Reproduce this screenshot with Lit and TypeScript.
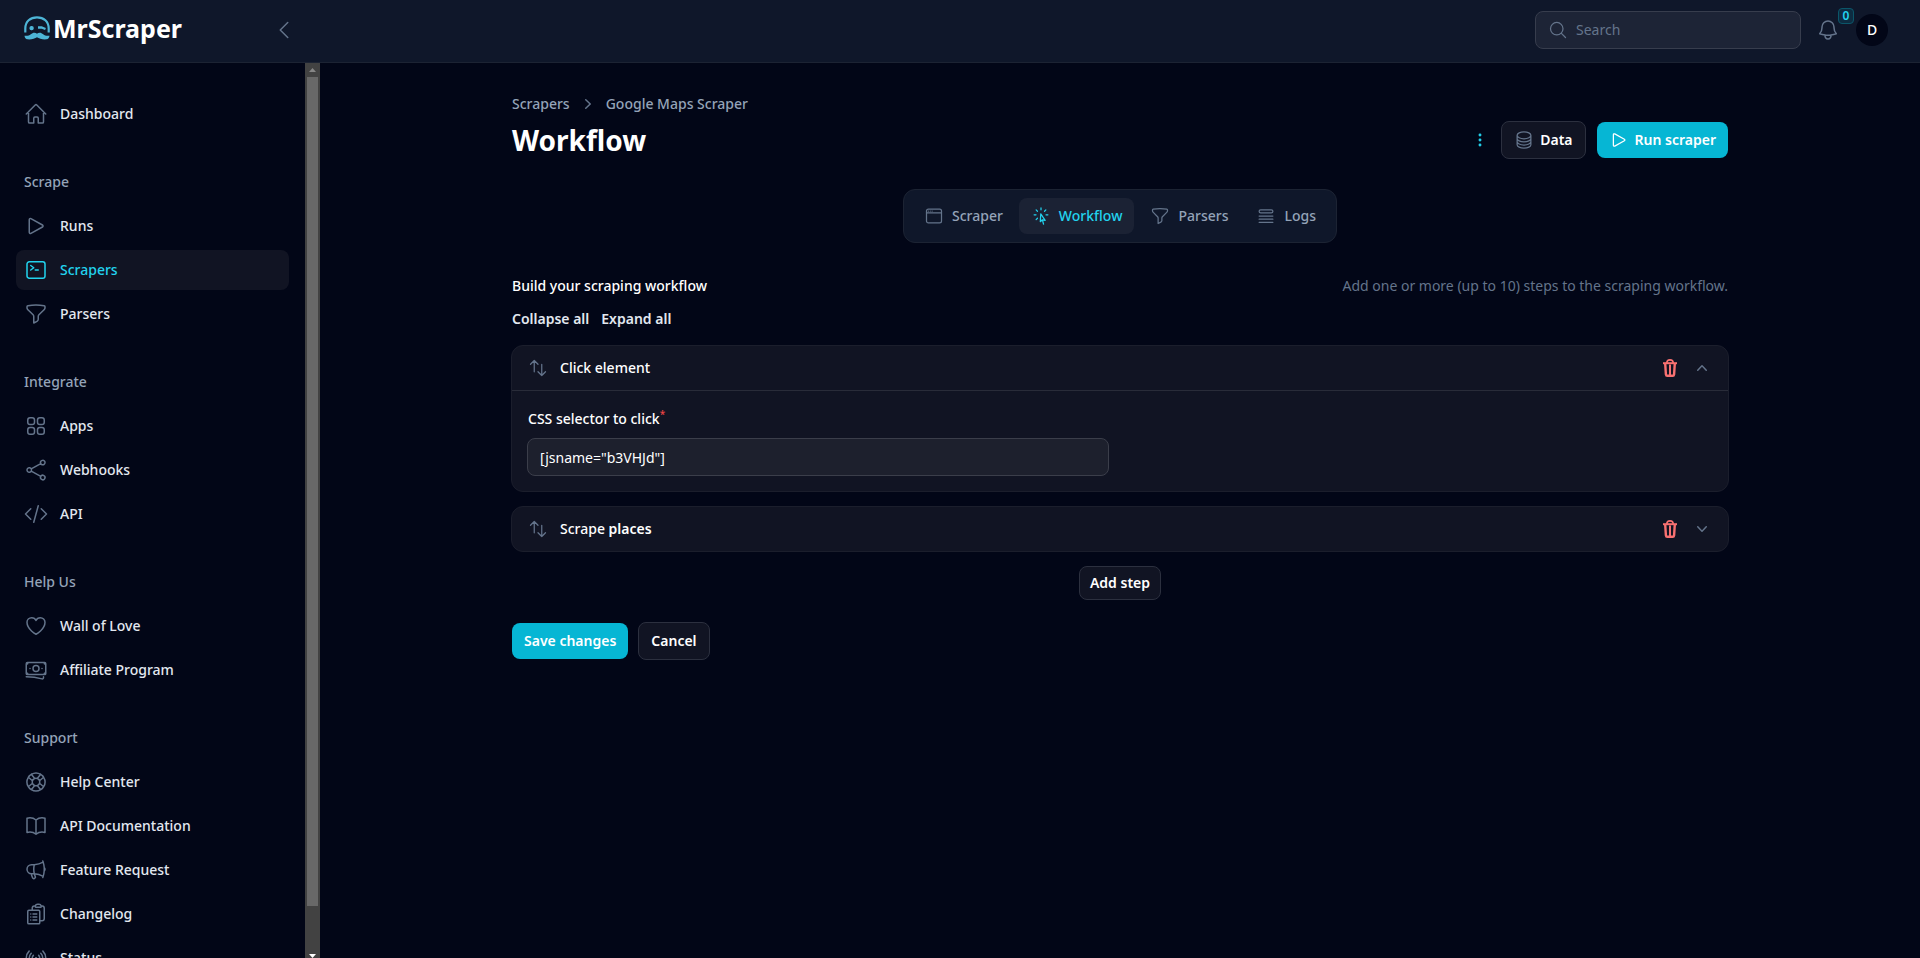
import { LitElement, html, css, svg, nothing } from "lit";
import { customElement, property, state } from "lit/decorators.js";
import { classMap } from "lit/directives/class-map.js";

const outline: Record<string, string[]> = {
  home: [
    "m2.25 12 8.954-8.955c.44-.439 1.152-.439 1.591 0L21.75 12M4.5 9.75v10.125c0 .621.504 1.125 1.125 1.125H9.75v-4.875c0-.621.504-1.125 1.125-1.125h2.25c.621 0 1.125.504 1.125 1.125V21h4.125c.621 0 1.125-.504 1.125-1.125V9.75",
  ],
  play: [
    "M5.25 5.653c0-.856.917-1.398 1.667-.986l11.54 6.347a1.125 1.125 0 0 1 0 1.972l-11.54 6.347a1.125 1.125 0 0 1-1.667-.986V5.653Z",
  ],
  terminal: [
    "m6.75 7.5 3 2.25-3 2.25m4.5 0h3m-9 8.25h13.5A2.25 2.25 0 0 0 21 18V6a2.25 2.25 0 0 0-2.25-2.25H5.25A2.25 2.25 0 0 0 3 6v12a2.25 2.25 0 0 0 2.25 2.25Z",
  ],
  funnel: [
    "M12 3c2.755 0 5.455.232 8.083.678.533.09.917.556.917 1.096v1.044a2.25 2.25 0 0 1-.659 1.591l-5.432 5.432a2.25 2.25 0 0 0-.659 1.591v2.927a2.25 2.25 0 0 1-1.244 2.013L9.75 21v-6.568a2.25 2.25 0 0 0-.659-1.591L3.659 7.409A2.25 2.25 0 0 1 3 5.818V4.774c0-.54.384-1.006.917-1.096A48.32 48.32 0 0 1 12 3Z",
  ],
  apps: [
    "M3.75 6A2.25 2.25 0 0 1 6 3.75h2.25A2.25 2.25 0 0 1 10.5 6v2.25a2.25 2.25 0 0 1-2.25 2.25H6a2.25 2.25 0 0 1-2.25-2.25V6ZM3.75 15.75A2.25 2.25 0 0 1 6 13.5h2.25a2.25 2.25 0 0 1 2.25 2.25V18a2.25 2.25 0 0 1-2.25 2.25H6A2.25 2.25 0 0 1 3.75 18v-2.25ZM13.5 6a2.25 2.25 0 0 1 2.25-2.25H18A2.25 2.25 0 0 1 20.25 6v2.25A2.25 2.25 0 0 1 18 10.5h-2.25a2.25 2.25 0 0 1-2.25-2.25V6ZM13.5 15.75a2.25 2.25 0 0 1 2.25-2.25H18a2.25 2.25 0 0 1 2.25 2.25V18A2.25 2.25 0 0 1 18 20.25h-2.25A2.25 2.25 0 0 1 13.5 18v-2.25Z",
  ],
  share: [
    "M7.217 10.907a2.25 2.25 0 1 0 0 2.186m0-2.186c.18.324.283.696.283 1.093s-.103.77-.283 1.093m0-2.186 9.566-5.314m-9.566 7.5 9.566 5.314m0 0a2.25 2.25 0 1 0 3.935 2.186 2.25 2.25 0 0 0-3.935-2.186Zm0-12.814a2.25 2.25 0 1 0 3.933-2.185 2.25 2.25 0 0 0-3.933 2.185Z",
  ],
  code: ["M17.25 6.75 22.5 12l-5.25 5.25m-10.5 0L1.5 12l5.25-5.25m7.5-3-4.5 16.5"],
  heart: [
    "M21 8.25c0-2.485-2.099-4.5-4.688-4.5-1.935 0-3.597 1.126-4.312 2.733-.715-1.607-2.377-2.733-4.313-2.733C5.1 3.75 3 5.765 3 8.25c0 7.22 9 12 9 12s9-4.78 9-12Z",
  ],
  cash: [
    "M2.25 18.75a60.07 60.07 0 0 1 15.797 2.101c.727.198 1.453-.342 1.453-1.096V18.75M3.75 4.5v.75A.75.75 0 0 1 3 6h-.75m0 0v-.375c0-.621.504-1.125 1.125-1.125H20.25M2.25 6v9m18-10.5v.75c0 .414.336.75.75.75h.75m-1.5-1.5h.375c.621 0 1.125.504 1.125 1.125v9.75c0 .621-.504 1.125-1.125 1.125h-.375m1.5-1.5H21a.75.75 0 0 0-.75.75v.75m0 0H3.75m0 0h-.375a1.125 1.125 0 0 1-1.125-1.125V15m1.5 1.5v-.75A.75.75 0 0 0 3 15h-.75M15 10.5a3 3 0 1 1-6 0 3 3 0 0 1 6 0Zm3 0h.008v.008H18V10.5Zm-12 0h.008v.008H6V10.5Z",
  ],
  lifebuoy: [
    "M16.712 4.33a9.027 9.027 0 0 1 1.652 1.306c.51.51.944 1.064 1.306 1.652M16.712 4.33l-3.448 4.138m3.448-4.138a9.014 9.014 0 0 0-9.424 0M19.67 7.288l-4.138 3.448m4.138-3.448a9.014 9.014 0 0 1 0 9.424m-4.138-5.976a3.736 3.736 0 0 0-.88-1.388 3.737 3.737 0 0 0-1.388-.88m2.268 2.268a3.765 3.765 0 0 1 0 2.528m-2.268-4.796a3.765 3.765 0 0 0-2.528 0m4.796 4.796c-.181.506-.475.982-.88 1.388a3.736 3.736 0 0 1-1.388.88m2.268-2.268 4.138 3.448m0 0a9.027 9.027 0 0 1-1.306 1.652c-.51.51-1.064.944-1.652 1.306m0 0-3.448-4.138m3.448 4.138a9.014 9.014 0 0 1-9.424 0m5.976-4.138a3.765 3.765 0 0 1-2.528 0m0 0a3.736 3.736 0 0 1-1.388-.88 3.737 3.737 0 0 1-.88-1.388m2.268 2.268L7.288 19.67m0 0a9.024 9.024 0 0 1-1.652-1.306 9.027 9.027 0 0 1-1.306-1.652m0 0 4.138-3.448M4.33 16.712a9.014 9.014 0 0 1 0-9.424m4.138 5.976a3.765 3.765 0 0 1 0-2.528m0 0c.181-.506.475-.982.88-1.388a3.736 3.736 0 0 1 1.388-.88m-2.268 2.268L4.33 7.288m6.406 1.18L7.288 4.33m0 0a9.024 9.024 0 0 0-1.652 1.306A9.025 9.025 0 0 0 4.33 7.288",
  ],
  book: [
    "M12 6.042A8.967 8.967 0 0 0 6 3.75c-1.052 0-2.062.18-3 .512v14.25A8.987 8.987 0 0 1 6 18c2.305 0 4.408.867 6 2.292m0-14.25a8.966 8.966 0 0 1 6-2.292c1.052 0 2.062.18 3 .512v14.25A8.987 8.987 0 0 0 18 18a8.967 8.967 0 0 0-6 2.292m0-14.25v14.25",
  ],
  megaphone: [
    "M10.34 15.84c-.688-.06-1.386-.09-2.09-.09H7.5a4.5 4.5 0 1 1 0-9h.75c.704 0 1.402-.03 2.09-.09m0 9.18c.253.962.584 1.892.985 2.783.247.55.06 1.21-.463 1.511l-.657.38c-.551.318-1.26.117-1.527-.461a20.845 20.845 0 0 1-1.44-4.282m3.102.069a18.03 18.03 0 0 1-.59-4.59c0-1.586.205-3.124.59-4.59m0 9.18a23.848 23.848 0 0 1 8.835 2.535M10.34 6.66a23.847 23.847 0 0 0 8.835-2.535m0 0A23.74 23.74 0 0 0 18.795 3m.38 1.125a23.91 23.91 0 0 1 1.014 5.395m-1.014 8.855c-.118.38-.245.754-.38 1.125m.38-1.125a23.91 23.91 0 0 0 1.014-5.395m0-3.46c.495.413.811 1.035.811 1.73 0 .695-.316 1.317-.811 1.73m0-3.46a24.347 24.347 0 0 1 0 3.46",
  ],
  clipboard: [
    "M9 12h3.75M9 15h3.75M9 18h3.75m3 .75H18a2.25 2.25 0 0 0 2.25-2.25V6.108c0-1.135-.845-2.098-1.976-2.192a48.424 48.424 0 0 0-1.123-.08m-5.801 0c-.065.21-.1.433-.1.664 0 .414.336.75.75.75h4.5a.75.75 0 0 0 .75-.75 2.25 2.25 0 0 0-.1-.664m-5.8 0A2.251 2.251 0 0 1 13.5 2.25H15c1.012 0 1.867.668 2.15 1.586m-5.8 0c-.376.023-.75.05-1.124.08C9.095 4.01 8.25 4.973 8.25 6.108V8.25m0 0H4.875c-.621 0-1.125.504-1.125 1.125v11.25c0 .621.504 1.125 1.125 1.125h9.75c.621 0 1.125-.504 1.125-1.125V9.375c0-.621-.504-1.125-1.125-1.125H8.25ZM6.75 12h.008v.008H6.75V12Zm0 3h.008v.008H6.75V15Zm0 3h.008v.008H6.75V18Z",
  ],
  signal: [
    "M9.348 14.652a3.75 3.75 0 0 1 0-5.304m5.304 0a3.75 3.75 0 0 1 0 5.304m-7.425 2.121a6.75 6.75 0 0 1 0-9.546m9.546 0a6.75 6.75 0 0 1 0 9.546M5.106 18.894c-3.808-3.807-3.808-9.98 0-13.788m13.788 0c3.808 3.807 3.808 9.98 0 13.788M12 12h.008v.008H12V12Zm.375 0a.375.375 0 1 1-.75 0 .375.375 0 0 1 .75 0Z",
  ],
  chevronLeft: ["M15.75 19.5 8.25 12l7.5-7.5"],
  search: ["m21 21-5.197-5.197m0 0A7.5 7.5 0 1 0 5.196 5.196a7.5 7.5 0 0 0 10.607 10.607Z"],
  bell: [
    "M14.857 17.082a23.848 23.848 0 0 0 5.454-1.31A8.967 8.967 0 0 1 18 9.75V9A6 6 0 0 0 6 9v.75a8.967 8.967 0 0 1-2.312 6.022c1.733.64 3.56 1.085 5.455 1.31m5.714 0a24.255 24.255 0 0 1-5.714 0m5.714 0a3 3 0 1 1-5.714 0",
  ],
  database: [
    "M20.25 6.375c0 2.278-3.694 4.125-8.25 4.125S3.75 8.653 3.75 6.375m16.5 0c0-2.278-3.694-4.125-8.25-4.125S3.75 4.097 3.75 6.375m16.5 0v11.25c0 2.278-3.694 4.125-8.25 4.125s-8.25-1.847-8.25-4.125V6.375m16.5 0v3.75m-16.5-3.75v3.75m16.5 0v3.75C20.25 16.153 16.556 18 12 18s-8.25-1.847-8.25-4.125v-3.75m16.5 0c0 2.278-3.694 4.125-8.25 4.125s-8.25-1.847-8.25-4.125",
  ],
  window: [
    "M3 8.25V18a2.25 2.25 0 0 0 2.25 2.25h13.5A2.25 2.25 0 0 0 21 18V8.25m-18 0V6a2.25 2.25 0 0 1 2.25-2.25h13.5A2.25 2.25 0 0 1 21 6v2.25m-18 0h18M5.25 6h.008v.008H5.25V6ZM7.5 6h.008v.008H7.5V6Zm2.25 0h.008v.008H9.75V6Z",
  ],
  cursor: [
    "M15.042 21.672 13.684 16.6m0 0-2.51 2.225.569-9.47 5.227 7.917-3.286-.672ZM12 2.25V4.5m5.834.166-1.591 1.591M20.25 10.5H18M7.757 14.743l-1.59 1.59M6 10.5H3.75m4.007-4.243-1.59-1.59",
  ],
  queue: [
    "M3.75 12h16.5m-16.5 3.75h16.5M3.75 19.5h16.5M5.625 4.5h12.75a1.875 1.875 0 0 1 0 3.75H5.625a1.875 1.875 0 0 1 0-3.75Z",
  ],
  arrows: ["M3 7.5 7.5 3m0 0L12 7.5M7.5 3v13.5m13.5 0L16.5 21m0 0L12 16.5m4.5 4.5V7.5"],
  dots: [
    "M12 6.75a.75.75 0 1 1 0-1.5.75.75 0 0 1 0 1.5ZM12 12.75a.75.75 0 1 1 0-1.5.75.75 0 0 1 0 1.5ZM12 18.75a.75.75 0 1 1 0-1.5.75.75 0 0 1 0 1.5Z",
  ],
};

const solid: Record<string, string[]> = {
  chevronRight: [
    "M7.21 14.77a.75.75 0 0 1 .02-1.06L11.168 10 7.23 6.29a.75.75 0 1 1 1.04-1.08l4.5 4.25a.75.75 0 0 1 0 1.08l-4.5 4.25a.75.75 0 0 1-1.06-.02Z",
  ],
  chevronUp: [
    "M14.77 12.79a.75.75 0 0 1-1.06-.02L10 8.832 6.29 12.77a.75.75 0 1 1-1.08-1.04l4.25-4.5a.75.75 0 0 1 1.08 0l4.25 4.5a.75.75 0 0 1-.02 1.06Z",
  ],
  chevronDown: [
    "M5.23 7.21a.75.75 0 0 1 1.06.02L10 11.168l3.71-3.938a.75.75 0 1 1 1.08 1.04l-4.25 4.5a.75.75 0 0 1-1.08 0l-4.25-4.5a.75.75 0 0 1 .02-1.06Z",
  ],
};

@customElement("ui-icon")
export class UiIcon extends LitElement {
  @property() name = "";
  @property({ type: Number }) size = 24;
  @property({ type: Number }) weight = 1.5;

  static styles = css`
    :host {
      display: inline-flex;
      flex: none;
    }
    .glyph {
      display: block;
    }
  `;

  render() {
    const isSolid = this.name in solid;
    const paths = (isSolid ? solid : outline)[this.name] ?? [];
    const box = isSolid ? "0 0 20 20" : "0 0 24 24";
    return html`<svg
      class="glyph"
      width=${this.size}
      height=${this.size}
      viewBox=${box}
      fill=${isSolid ? "currentColor" : "none"}
      stroke=${isSolid ? "none" : "currentColor"}
      stroke-width=${this.weight}
      stroke-linecap="round"
      stroke-linejoin="round"
      aria-hidden="true"
    >
      ${paths.map((d) => svg`<path d=${d}></path>`)}
    </svg>`;
  }
}

interface NavItem {
  label: string;
  icon: string;
  active?: boolean;
}

interface NavGroup {
  title?: string;
  items: NavItem[];
}

const navigation: NavGroup[] = [
  { items: [{ label: "Dashboard", icon: "home" }] },
  {
    title: "Scrape",
    items: [
      { label: "Runs", icon: "play" },
      { label: "Scrapers", icon: "terminal", active: true },
      { label: "Parsers", icon: "funnel" },
    ],
  },
  {
    title: "Integrate",
    items: [
      { label: "Apps", icon: "apps" },
      { label: "Webhooks", icon: "share" },
      { label: "API", icon: "code" },
    ],
  },
  {
    title: "Help Us",
    items: [
      { label: "Wall of Love", icon: "heart" },
      { label: "Affiliate Program", icon: "cash" },
    ],
  },
  {
    title: "Support",
    items: [
      { label: "Help Center", icon: "lifebuoy" },
      { label: "API Documentation", icon: "book" },
      { label: "Feature Request", icon: "megaphone" },
      { label: "Changelog", icon: "clipboard" },
      { label: "Status", icon: "signal" },
    ],
  },
];

const tabs: NavItem[] = [
  { label: "Scraper", icon: "window" },
  { label: "Workflow", icon: "cursor", active: true },
  { label: "Parsers", icon: "funnel" },
  { label: "Logs", icon: "queue" },
];

@customElement("app-root")
export class AppRoot extends LitElement {
  @state() private open = [true, false];

  static styles = css`
    :host {
      display: flex;
      flex-direction: column;
      height: 100vh;
      overflow: hidden;
      background: #020617;
      color: #fff;
      font: 14px/20px "Noto Sans", "Open Sans", sans-serif;
    }
    *,
    *::before,
    *::after {
      box-sizing: border-box;
    }
    a {
      color: inherit;
      text-decoration: none;
    }
    button,
    input {
      font: inherit;
      color: inherit;
    }
    button {
      display: inline-flex;
      align-items: center;
      justify-content: center;
      margin: 0;
      padding: 0;
      border: 0;
      background: none;
      cursor: pointer;
    }
    h1,
    h2,
    p {
      margin: 0;
    }

    .topbar {
      flex: none;
      display: flex;
      align-items: center;
      height: 63px;
      padding: 0 32px 2px 24px;
      border-bottom: 1px solid #1c2333;
      background: #0f172a;
    }
    .brand {
      display: flex;
      align-items: center;
      gap: 2px;
      width: 248px;
      padding-bottom: 4px;
      font-size: 25px;
      line-height: 32px;
      font-weight: 700;
    }
    .muted {
      color: #64748b;
    }
    .topbar-end {
      display: flex;
      align-items: center;
      margin-left: auto;
    }
    .search {
      display: flex;
      align-items: center;
      gap: 8px;
      width: 266px;
      height: 38px;
      padding: 0 12px;
      border: 1px solid #373d4d;
      border-radius: 8px;
      background: #1d2436;
      color: #64748b;
    }
    .search-input {
      flex: 1;
      min-width: 0;
      padding: 0;
      border: 0;
      outline: 0;
      background: none;
      color: #fff;
    }
    .search-input::placeholder {
      color: #64748b;
      opacity: 1;
    }
    .alerts {
      position: relative;
      margin: 0 16px 0 15px;
      color: #64748b;
    }
    .alerts-count {
      position: absolute;
      left: 22px;
      top: -10px;
      width: 16px;
      height: 16px;
      border: 1px solid #0b5669;
      border-radius: 4px;
      background: #0d2c41;
      color: #22d3ee;
      font-size: 12px;
      line-height: 14px;
      font-weight: 600;
    }
    .avatar {
      width: 32px;
      height: 32px;
      border-radius: 50%;
      background: #020617;
      font-weight: 500;
    }

    .body {
      flex: 1;
      display: flex;
      min-height: 0;
    }
    .sidebar {
      flex: none;
      display: flex;
      width: 320px;
    }
    .nav {
      flex: 1;
      padding: 31px 16px 0;
      overflow: hidden;
    }
    .group {
      display: flex;
      flex-direction: column;
      gap: 4px;
      margin-bottom: 38px;
    }
    .group-title {
      padding: 0 8px;
      margin-bottom: 10px;
      color: #94a3b8;
      font-size: 14px;
      line-height: 20px;
      font-weight: 500;
    }
    .link {
      display: flex;
      align-items: center;
      gap: 12px;
      height: 40px;
      padding: 0 8px;
      border-radius: 8px;
      color: #e2e8f0;
      font-weight: 500;
    }
    .link.active {
      background: #111423;
      color: #22d3ee;
    }
    .link:not(.active) ui-icon {
      color: #64748b;
    }
    .scrollbar {
      flex: none;
      display: flex;
      flex-direction: column;
      align-items: center;
      width: 15px;
      background: #424242;
    }
    .arrow {
      flex: none;
      display: block;
      width: 15px;
      height: 14px;
    }
    .thumb {
      flex: 22;
      width: 11px;
      background: #686868;
    }
    .thumb-rest {
      flex: 1;
    }

    .main {
      flex: 1;
      min-width: 0;
      overflow: hidden;
    }
    .container {
      max-width: 1280px;
      margin: 0 auto;
      padding: 31px 32px;
    }
    .crumbs {
      display: flex;
      align-items: center;
      gap: 8px;
      color: #94a3b8;
      font-weight: 500;
    }
    .heading {
      display: flex;
      align-items: center;
      justify-content: space-between;
      margin-top: 7px;
    }
    .title {
      font-size: 28px;
      line-height: 38px;
      font-weight: 700;
    }
    .actions {
      display: flex;
      align-items: center;
      gap: 11px;
    }
    .more {
      color: #22d3ee;
    }
    .btn {
      gap: 6px;
      height: 38px;
      padding: 0 12px;
      border: 1px solid #2c303f;
      border-radius: 8px;
      background: #111423;
      font-weight: 600;
    }
    .btn.primary {
      height: 36px;
      border: 0;
      background: #06b6d4;
    }
    .btn.small {
      height: 34px;
      padding: 0 10px;
    }
    .tabs {
      display: flex;
      gap: 4px;
      width: fit-content;
      margin: 30px auto 0;
      padding: 8px;
      border: 1px solid #1c2333;
      border-radius: 12px;
      background: #0f172a;
    }
    .tab {
      display: flex;
      align-items: center;
      gap: 8px;
      height: 36px;
      padding: 0 12px;
      border-radius: 8px;
      color: #94a3b8;
      font-weight: 500;
    }
    .tab.active {
      background: #1b2234;
      color: #22d3ee;
    }
    .tab:not(.active) ui-icon {
      color: #64748b;
    }
    .intro {
      display: flex;
      justify-content: space-between;
      margin-top: 33px;
    }
    .intro-title {
      font-size: 14px;
      line-height: 20px;
      font-weight: 500;
    }
    .toggles {
      display: flex;
      gap: 12px;
      margin-top: 13px;
      color: #e2e8f0;
    }
    .toggle {
      font-weight: 600;
    }
    .steps {
      display: flex;
      flex-direction: column;
      gap: 14px;
      margin: 16px -1px 0;
    }
    .step {
      border: 1px solid #1b1e2c;
      border-radius: 12px;
      background: #111423;
    }
    .step-head {
      display: flex;
      align-items: center;
      gap: 12px;
      height: 44px;
      padding: 0 16px;
    }
    .step-name {
      flex: 1;
      font-size: 14px;
      line-height: 20px;
      font-weight: 500;
    }
    .step-name strong {
      font-weight: 600;
    }
    .delete {
      color: #f87171;
    }
    .step-body {
      display: grid;
      grid-template-columns: 1fr 1fr;
      gap: 24px;
      padding: 18px 16px 15px;
      border-top: 1px solid #292c39;
    }
    .field {
      display: flex;
      flex-direction: column;
      gap: 9px;
    }
    .field-label {
      font-weight: 500;
    }
    .required {
      color: #ef4444;
      font-size: 10px;
      line-height: 10px;
      vertical-align: super;
    }
    .input {
      height: 38px;
      margin: 0 -1px;
      padding: 0 12px;
      border: 1px solid #3b3e4a;
      border-radius: 8px;
      outline: 0;
      background: #1d202d;
    }
    .add {
      display: flex;
      justify-content: center;
      margin-top: 14px;
    }
    .footer {
      display: flex;
      align-items: center;
      gap: 10px;
      margin-top: 22px;
    }
  `;

  private toggle(index: number) {
    this.open = this.open.map((value, i) => (i === index ? !value : value));
  }

  private setAll(value: boolean) {
    this.open = this.open.map(() => value);
  }

  private renderLogo() {
    return html`<svg width="27" height="24" viewBox="0 0 27 24" fill="none" stroke="#4db5d6" aria-hidden="true">
      <path stroke-width="2.200" d="M1.300 16.500V12.500C1.300 5.500 6.300 1.300 13 1.300S24.700 5.500 24.700 12.500V16.500" />
      <rect x="5.500" y="10" width="4.200" height="4.200" rx="1.800" fill="#4db5d6" stroke="none" />
      <path stroke-width="2.400" d="M14 11.500h3.500l4 1.500" />
      <path
        fill="#4db5d6"
        stroke="none"
        d="M13 17.800c-1.500-1.600-4.200-1.600-6.200.5C5.300 19.800 2.800 20 .5 19.700c.2 1.700 1 3 2.400 3.600 4 .6 8-.6 10.100-2 2.100 1.400 6.100 2.600 10.100 2 1.400-.6 2.200-1.900 2.400-3.600-2.300.3-4.800.1-6.300-1.400-2-2.100-4.700-2.100-6.200-.5Z"
      />
    </svg>`;
  }

  private renderStep(index: number, name: unknown, body: unknown) {
    const open = this.open[index];
    return html`<section class="step">
      <header class="step-head">
        <ui-icon class="muted" name="arrows" size="20"></ui-icon>
        <h2 class="step-name">${name}</h2>
        <button class="delete" aria-label="Delete step">
          <svg width="20" height="20" viewBox="0 0 20 20" fill="none" stroke="currentColor" aria-hidden="true">
            <path stroke-width="2" d="M3 5.200h14" />
            <path stroke-width="1.600" d="M6.800 5C6.800 2.600 7.800 1.900 10 1.900s3.200.7 3.200 3.100" />
            <path stroke-width="2.400" stroke-linejoin="round" d="m5.200 5.500.7 10.800c.1.900.5 1.500 1.400 1.500h5.400c.9 0 1.300-.6 1.400-1.500l.7-10.800" />
            <path stroke-width="2" d="M10 6.500V17" />
          </svg>
        </button>
        <button class="muted" aria-label=${open ? "Collapse step" : "Expand step"} @click=${() => this.toggle(index)}>
          <ui-icon name=${open ? "chevronUp" : "chevronDown"} size="20"></ui-icon>
        </button>
      </header>
      ${open && body ? html`<div class="step-body">${body}</div>` : nothing}
    </section>`;
  }

  render() {
    return html`
      <header class="topbar">
        <a class="brand" href="#">${this.renderLogo()}<span>MrScraper</span></a>
        <button class="muted" aria-label="Collapse sidebar">
          <ui-icon name="chevronLeft"></ui-icon>
        </button>
        <div class="topbar-end">
          <label class="search">
            <ui-icon name="search" size="20"></ui-icon>
            <input class="search-input" type="text" placeholder="Search" aria-label="Search" />
          </label>
          <button class="alerts" aria-label="Notifications">
            <ui-icon name="bell"></ui-icon>
            <span class="alerts-count">0</span>
          </button>
          <button class="avatar">D</button>
        </div>
      </header>
      <div class="body">
        <aside class="sidebar">
          <nav class="nav">
            ${navigation.map(
              (group) => html`<div class="group">
                ${group.title ? html`<h2 class="group-title">${group.title}</h2>` : nothing}
                ${group.items.map(
                  (item) => html`<a class=${classMap({ link: true, active: !!item.active })} href="#">
                    <ui-icon name=${item.icon}></ui-icon>${item.label}
                  </a>`
                )}
              </div>`
            )}
          </nav>
          <div class="scrollbar">
            <svg class="arrow" viewBox="0 0 15 14"><path d="M4 9h7L7.500 5Z" fill="#868686" /></svg>
            <div class="thumb"></div>
            <div class="thumb-rest"></div>
            <svg class="arrow" viewBox="0 0 15 14"><path d="M4 10h7l-3.500 4Z" fill="#fff" /></svg>
          </div>
        </aside>
        <main class="main">
          <div class="container">
            <nav class="crumbs" aria-label="Breadcrumb">
              <a href="#">Scrapers</a>
              <ui-icon class="muted" name="chevronRight" size="20"></ui-icon>
              <a href="#">Google Maps Scraper</a>
            </nav>
            <div class="heading">
              <h1 class="title">Workflow</h1>
              <div class="actions">
                <button class="more" aria-label="More actions">
                  <ui-icon name="dots" size="20" weight="2"></ui-icon>
                </button>
                <button class="btn"><ui-icon class="muted" name="database" size="20"></ui-icon>Data</button>
                <button class="btn primary"><ui-icon name="play" size="20"></ui-icon>Run scraper</button>
              </div>
            </div>
            <nav class="tabs">
              ${tabs.map(
                (tab) => html`<a class=${classMap({ tab: true, active: !!tab.active })} href="#">
                  <ui-icon name=${tab.icon} size="20"></ui-icon>${tab.label}
                </a>`
              )}
            </nav>
            <div class="intro">
              <h2 class="intro-title">Build your scraping workflow</h2>
              <p class="muted">Add one or more (up to 10) steps to the scraping workflow.</p>
            </div>
            <div class="toggles">
              <button class="toggle" @click=${() => this.setAll(false)}>Collapse all</button>
              <button class="toggle" @click=${() => this.setAll(true)}>Expand all</button>
            </div>
            <div class="steps">
              ${this.renderStep(
                0,
                "Click element",
                html`<div class="field">
                  <label class="field-label" for="selector">CSS selector to click<span class="required">*</span></label>
                  <input class="input" id="selector" type="text" .value=${'[jsname="b3VHJd"]'} />
                </div>`
              )}
              ${this.renderStep(1, html`Scrape <strong>places</strong>`, null)}
            </div>
            <div class="add"><button class="btn small">Add step</button></div>
            <div class="footer">
              <button class="btn primary">Save changes</button>
              <button class="btn">Cancel</button>
            </div>
          </div>
        </main>
      </div>
    `;
  }
}
